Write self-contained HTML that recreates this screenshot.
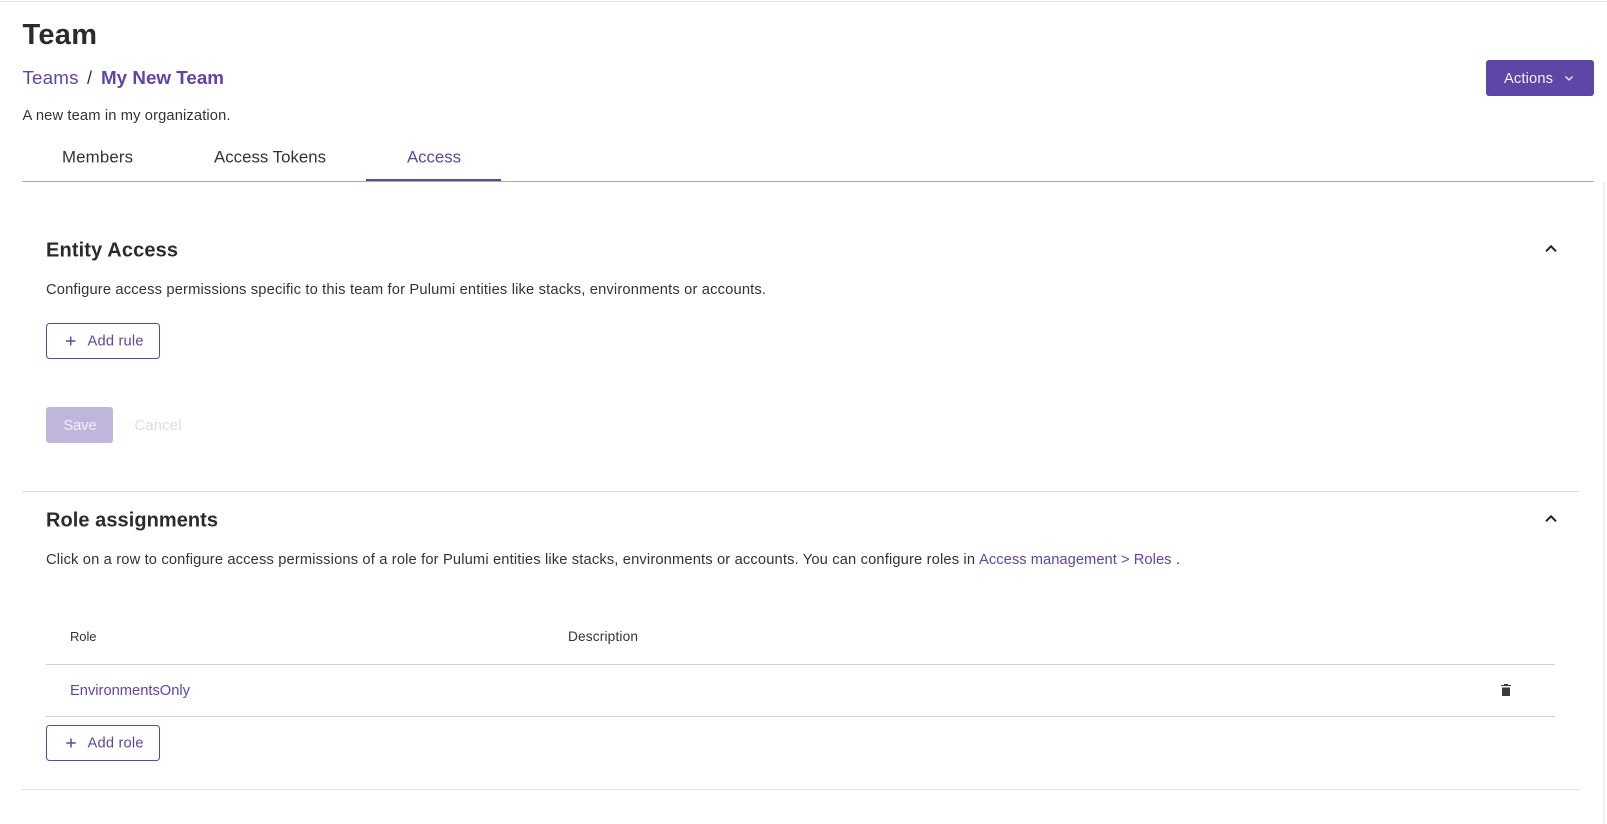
<!DOCTYPE html>
<html>
<head>
<meta charset="utf-8">
<title>Team</title>
<style>
html,body{margin:0;padding:0;background:#fff;width:1607px;height:824px;overflow:hidden}
svg{display:block}
text{font-family:"Liberation Sans",sans-serif;font-size:14.7px;fill:#333}
.p{fill:#5f45a5}
.b{font-weight:700}
</style>
</head>
<body>
<svg width="1607" height="824" viewBox="0 0 1607 824" xmlns="http://www.w3.org/2000/svg">
<rect width="1607" height="824" fill="#fff"/>
<rect x="0" y="1" width="1607" height="1" fill="#e2e2e2"/>

<text x="22.5" y="44" class="b" style="font-size:29px;fill:#2b2b2b" textLength="74.5" lengthAdjust="spacing">Team</text>
<text x="22.5" y="84" class="p" style="font-size:18.8px" textLength="56" lengthAdjust="spacing">Teams</text>
<text x="87" y="84" style="font-size:18px">/</text>
<text x="101" y="84" class="p b" style="font-size:18.8px" textLength="123" lengthAdjust="spacing">My New Team</text>
<text x="22.5" y="120" textLength="208" lengthAdjust="spacing">A new team in my organization.</text>

<rect x="1486" y="60" width="108" height="36" rx="3" fill="#5f45a5"/>
<text x="1504" y="83" style="fill:#f4f1fb" textLength="49" lengthAdjust="spacing">Actions</text>
<path d="M1565.5 76.500l3.500 3.500 3.500-3.500" fill="none" stroke="#f4f1fb" stroke-width="1.3"/>

<text x="62" y="162.500" style="font-size:16.800px" textLength="71" lengthAdjust="spacing">Members</text>
<text x="214" y="162.500" style="font-size:16.800px" textLength="112" lengthAdjust="spacing">Access Tokens</text>
<text x="407" y="162.500" class="p" style="font-size:16.800px" textLength="54" lengthAdjust="spacing">Access</text>
<rect x="22" y="181" width="1572" height="1" fill="#aaa"/>
<rect x="366" y="179" width="135" height="2" fill="#5f45a5"/>
<rect x="1603" y="182" width="2" height="642" fill="#f0f0f0"/>

<text x="46" y="256.500" class="b" style="font-size:20px;fill:#2b2b2b" textLength="132" lengthAdjust="spacing">Entity Access</text>
<path d="M1546 251.300L1551 246.300L1556 251.300" fill="none" stroke="#222" stroke-width="2"/>
<text x="46" y="294" textLength="720" lengthAdjust="spacing">Configure access permissions specific to this team for Pulumi entities like stacks, environments or accounts.</text>

<rect x="46.500" y="323.500" width="113" height="35" rx="3" fill="#fff" stroke="#5f45a5"/>
<path d="M70.700 336.500v9M66 341h9.400" fill="none" stroke="#5f45a5" stroke-width="1.500"/>
<text x="87.500" y="345.500" class="p" textLength="56" lengthAdjust="spacing">Add rule</text>

<rect x="46" y="407" width="67" height="36" rx="3" fill="#c0b6dc"/>
<text x="63.500" y="430" style="fill:#f4f1fb" textLength="33" lengthAdjust="spacing">Save</text>
<text x="134.500" y="430" style="fill:#dcdcdc" textLength="47" lengthAdjust="spacing">Cancel</text>

<rect x="22" y="491" width="1557" height="1" fill="#e0e0e0"/>

<text x="46" y="526.500" class="b" style="font-size:20px;fill:#2b2b2b" textLength="172" lengthAdjust="spacing">Role assignments</text>
<path d="M1546 521.300L1551 516.300L1556 521.300" fill="none" stroke="#222" stroke-width="2"/>
<text x="46" y="564" textLength="929" lengthAdjust="spacing">Click on a row to configure access permissions of a role for Pulumi entities like stacks, environments or accounts. You can configure roles in</text>
<text x="979" y="564" class="p" textLength="192.500" lengthAdjust="spacing">Access management &gt; Roles</text>
<text x="1176" y="564">.</text>

<text x="70" y="641" style="font-size:13px" textLength="26.500" lengthAdjust="spacing">Role</text>
<text x="568" y="641" style="font-size:13.700px" textLength="70" lengthAdjust="spacing">Description</text>
<rect x="46" y="664" width="1509" height="1" fill="#d0d0d0"/>
<text x="70" y="695" class="p" textLength="120" lengthAdjust="spacing">EnvironmentsOnly</text>
<path d="M1502 687.500h8v8.500h-8z" fill="#3a3a3a"/>
<path d="M1501 685h10v1h-10zM1504 684h4v1h-4z" fill="#3a3a3a"/>
<rect x="46" y="716" width="1509" height="1" fill="#d0d0d0"/>

<rect x="46.500" y="725.500" width="113" height="35" rx="3" fill="#fff" stroke="#5f45a5"/>
<path d="M71 738.500v9M66.300 743h9.400" fill="none" stroke="#5f45a5" stroke-width="1.500"/>
<text x="87.500" y="747.500" class="p" textLength="56" lengthAdjust="spacing">Add role</text>

<rect x="22" y="789" width="1557" height="1" fill="#e0e0e0"/>
</svg>
</body>
</html>
